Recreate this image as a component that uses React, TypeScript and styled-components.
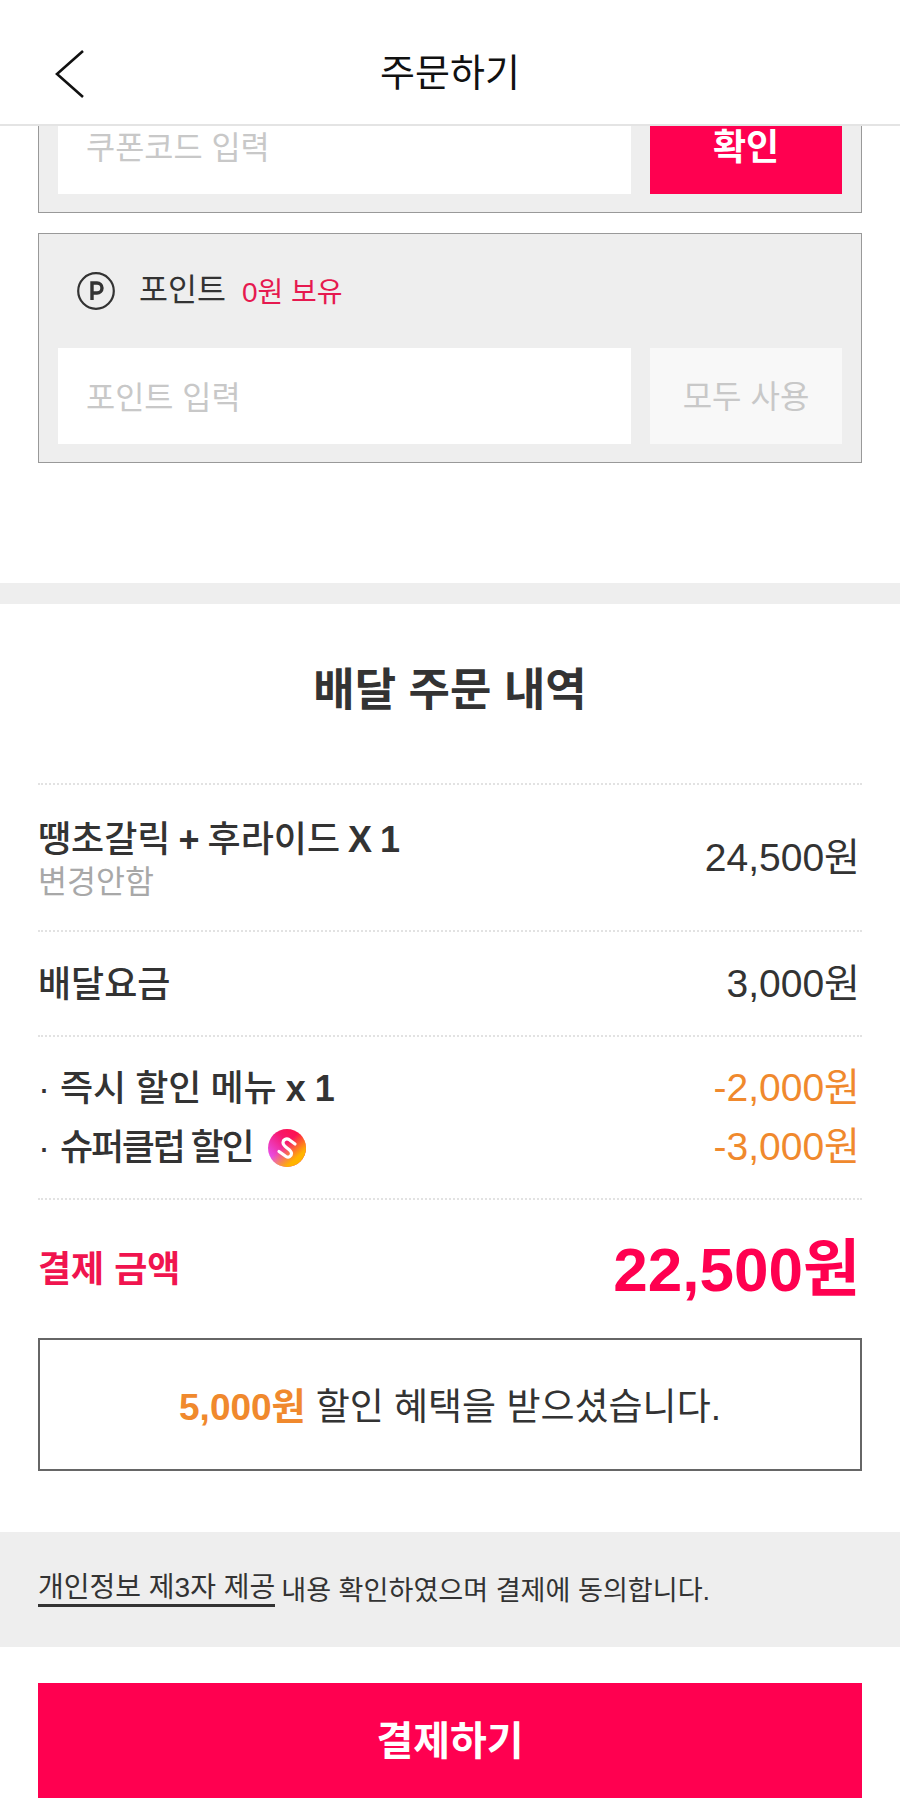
import React from 'react'
import styled, { createGlobalStyle } from 'styled-components'

const GlobalStyle = createGlobalStyle`
html, body {
  margin: 0;
  padding: 0;
  background: #fff;
}
* {
  box-sizing: border-box;
}
body {
  font-family: "Liberation Sans", "Noto Sans CJK KR", sans-serif;
  color: #333;
}
`;

const Page = styled.div`
position: relative;
width: 900px;
height: 1799px;
overflow: hidden;
background: #fff;
`;

const Header = styled.header`
position: absolute;
top: 0;
left: 0;
right: 0;
height: 126px;
padding-top: 21px;
background: #fff;
border-bottom: 2px solid #e4e4e4;
display: flex;
align-items: center;
justify-content: center;
z-index: 2;
`;

const BackIcon = styled.svg`
position: absolute;
left: 54px;
top: 49px;
`;

const HeaderTitle = styled.h1`
margin: 0;
font-size: 38px;
font-weight: 400;
color: #111;
line-height: 1;
`;

const BenefitArea = styled.section`
padding: 0 38px;
margin-top: -17px;
height: 600px;
display: flex;
flex-direction: column;
gap: 20px;
`;

const BenefitBox = styled.div`
height: 230px;
background: #eee;
border: 1px solid #999;
padding: 0 19px 18px;
display: flex;
flex-direction: column;
justify-content: flex-end;
`;

const BoxHeading = styled.div`
flex: 1;
display: flex;
align-items: center;
padding: 0 0 0 19px;
`;

const PointLabel = styled.span`
margin-left: 24px;
font-size: 31.5px;
line-height: 1;
color: #333;
`;

const PointOwned = styled.span`
margin: 4px 0 0 16px;
font-size: 28px;
line-height: 1;
color: #e6194f;
`;

const InputRow = styled.div`
display: flex;
gap: 19px;
height: 96px;
`;

const FakeInput = styled.div`
flex: 1;
background: #fff;
padding: 0 0 3px 28px;
display: flex;
align-items: center;
font-size: 31.7px;
color: #c8c8c8;
`;

type ActionProps = {
  $active?: boolean;
}

const ActionButton = styled.button<ActionProps>`
width: 192px;
height: 96px;
border: 0;
padding: 0 0 4px;
font-family: inherit;
font-size: ${({ $active }: ActionProps) => ($active ? '36px' : '32px')};
font-weight: ${({ $active }: ActionProps) => ($active ? 700 : 400)};
color: ${({ $active }: ActionProps) => ($active ? '#fff' : '#c8c8c8')};
background: ${({ $active }: ActionProps) => ($active ? '#ff0050' : '#f8f8f8')};
`;

const Band = styled.div`
height: 21px;
background: #eee;
`;

const Summary = styled.section`
padding: 0 38px;
`;

const SummaryTitle = styled.h2`
margin: 0;
height: 179px;
padding-bottom: 14px;
display: flex;
align-items: center;
justify-content: center;
font-size: 45px;
font-weight: 700;
color: #333;
`;

type RowGroupProps = {
  height: number;
}

const RowGroup = styled.div`
height: ${({ height }: RowGroupProps) => `${height}px`};
padding-top: 2px;
border-top: 2px dotted #e2e2e2;
display: flex;
flex-direction: column;
justify-content: center;
gap: 13px;
`;

const Row = styled.div`
display: flex;
align-items: center;
justify-content: space-between;
padding-right: 2px;
`;

type ItemNameProps = {
  $tight?: boolean;
  $compact?: boolean;
}

const ItemName = styled.div<ItemNameProps>`
font-size: 36px;
font-weight: 500;
line-height: 44px;
letter-spacing: ${({ $tight }: ItemNameProps) => ($tight ? '-2.2px' : '0')};
word-spacing: ${({ $compact }: ItemNameProps) => ($compact ? '-2px' : '-1px')};
color: #333;
display: flex;
align-items: center;
white-space: pre;
`;

const Bullet = styled.span`
width: 22px;
`;

const Qty = styled.b`
font-weight: 700;
`;

const ItemOption = styled.div`
margin-top: 2px;
font-size: 31.5px;
line-height: 36px;
color: #a8a8a8;
`;

type AmountProps = {
  $discount?: boolean;
}

const Amount = styled.div<AmountProps>`
font-size: 39px;
line-height: 44px;
margin-bottom: 2px;
color: ${({ $discount }: AmountProps) => ($discount ? '#f0892d' : '#333')};
`;

const ClubBadge = styled.svg`
margin-left: 16px;
`;

const TotalRow = styled.div`
height: 140px;
padding-bottom: 6px;
border-top: 2px dotted #e2e2e2;
display: flex;
align-items: center;
justify-content: space-between;
padding-right: 2px;
`;

const TotalLabel = styled.div`
font-size: 36px;
font-weight: 700;
color: #f0144f;
`;

const TotalAmount = styled.div`
font-size: 62px;
font-weight: 700;
padding-bottom: 4px;
color: #ff0050;
`;

const BenefitNotice = styled.div`
height: 133px;
border: 2px solid #666;
display: flex;
align-items: center;
justify-content: center;
font-size: 37px;
padding-bottom: 2px;
color: #333;
`;

const Saved = styled.strong`
color: #f0892d;
font-weight: 700;
margin-right: 10px;
`;

const AgreeBar = styled.div`
margin-top: 61px;
height: 115px;
background: #eee;
padding: 0 38px 2px;
display: flex;
align-items: center;
font-size: 27.1px;
color: #333;
`;

const AgreeLink = styled.span`
border-bottom: 3px solid #333;
margin-right: 6px;
font-size: 28px;
line-height: 33px;
`;

const PayArea = styled.div`
padding: 36px 38px 0;
`;

const PayButton = styled.button`
display: block;
width: 100%;
height: 115px;
border: 0;
padding: 0 0 6px;
background: #ff0050;
color: #fff;
font-family: inherit;
font-size: 40px;
font-weight: 700;
`;

export default function App() {
  return (
    <Page>
      <GlobalStyle />
      <Header>
        <BackIcon width="32" height="50" viewBox="0 0 32 50" fill="none">
          <path d="M29 2 L3 25 L29 48" stroke="#111" strokeWidth="2.6" />
        </BackIcon>
        <HeaderTitle>주문하기</HeaderTitle>
      </Header>

      <BenefitArea>
        <BenefitBox>
          <InputRow>
            <FakeInput>쿠폰코드 입력</FakeInput>
            <ActionButton $active>확인</ActionButton>
          </InputRow>
        </BenefitBox>
        <BenefitBox>
          <BoxHeading>
            <svg width="38" height="38" viewBox="0 0 38 38" fill="none">
              <circle cx="19" cy="19" r="17.8" stroke="#333" strokeWidth="2.2" />
              <path d="M15 28 V11 H20 a5 5 0 0 1 0 10 H15" stroke="#333" strokeWidth="3.4" />
            </svg>
            <PointLabel>포인트</PointLabel>
            <PointOwned>0원 보유</PointOwned>
          </BoxHeading>
          <InputRow>
            <FakeInput>포인트 입력</FakeInput>
            <ActionButton>모두 사용</ActionButton>
          </InputRow>
        </BenefitBox>
      </BenefitArea>

      <Band />

      <Summary>
        <SummaryTitle>배달 주문 내역</SummaryTitle>
        <RowGroup height={147}>
          <Row>
            <div>
              <ItemName $compact>땡초갈릭 <Qty>+</Qty> 후라이드 <Qty>X 1</Qty></ItemName>
              <ItemOption>변경안함</ItemOption>
            </div>
            <Amount>24,500원</Amount>
          </Row>
        </RowGroup>
        <RowGroup height={105}>
          <Row>
            <ItemName>배달요금</ItemName>
            <Amount>3,000원</Amount>
          </Row>
        </RowGroup>
        <RowGroup height={163}>
          <Row>
            <ItemName><Bullet>·</Bullet>즉시 할인 메뉴 <Qty>x 1</Qty></ItemName>
            <Amount $discount>-2,000원</Amount>
          </Row>
          <Row>
            <ItemName $tight>
              <Bullet>·</Bullet>슈퍼클럽 할인
              <ClubBadge width="38" height="38" viewBox="0 0 38 38" fill="none">
                <defs>
                  <linearGradient id="clubFill" x1="0.1" y1="0.75" x2="0.8" y2="0.05">
                    <stop offset="0" stopColor="#e84ee6" />
                    <stop offset="0.6" stopColor="#f7166c" />
                    <stop offset="1" stopColor="#ff1048" />
                  </linearGradient>
                  <linearGradient id="clubGlow" x1="0.4" y1="0.45" x2="0.85" y2="0.95">
                    <stop offset="0" stopColor="#ffb400" stopOpacity="0" />
                    <stop offset="0.7" stopColor="#ffb400" />
                  </linearGradient>
                </defs>
                <circle cx="19" cy="19" r="19" fill="url(#clubFill)" />
                <circle cx="19" cy="19" r="19" fill="url(#clubGlow)" />
                <path
                  d="M27 15 L21 10.5 C18 9 15 11 15 13.5 C15 16 17 17.5 19 19 C21 20.5 23.5 22 23.5 24.5 C23.5 27.5 20.5 29 18 27.5 L11 22.5"
                  stroke="#fff"
                  strokeWidth="3.2"
                  strokeLinecap="round"
                />
              </ClubBadge>
            </ItemName>
            <Amount $discount>-3,000원</Amount>
          </Row>
        </RowGroup>
        <TotalRow>
          <TotalLabel>결제 금액</TotalLabel>
          <TotalAmount>22,500원</TotalAmount>
        </TotalRow>
        <BenefitNotice>
          <Saved>5,000원</Saved>
          할인 혜택을 받으셨습니다.
        </BenefitNotice>
      </Summary>

      <AgreeBar>
        <AgreeLink>개인정보 제3자 제공</AgreeLink>
        내용 확인하였으며 결제에 동의합니다.
      </AgreeBar>

      <PayArea>
        <PayButton>결제하기</PayButton>
      </PayArea>
    </Page>
  )
}
